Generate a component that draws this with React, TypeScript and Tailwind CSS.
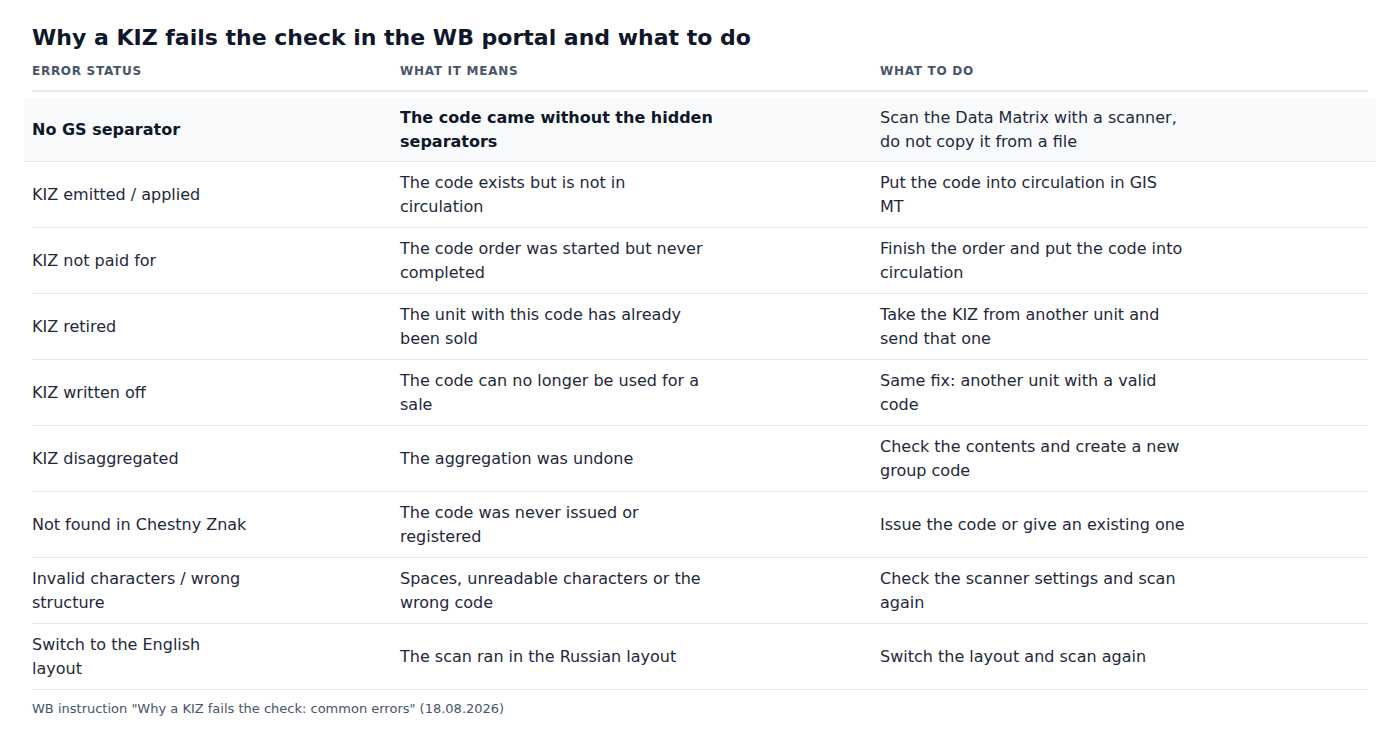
const rows = [
  ["No GS separator", "The code came without the hidden separators", "Scan the Data Matrix with a scanner, do not copy it from a file"],
  ["KIZ emitted / applied", "The code exists but is not in circulation", "Put the code into circulation in GIS MT"],
  ["KIZ not paid for", "The code order was started but never completed", "Finish the order and put the code into circulation"],
  ["KIZ retired", "The unit with this code has already been sold", "Take the KIZ from another unit and send that one"],
  ["KIZ written off", "The code can no longer be used for a sale", "Same fix: another unit with a valid code"],
  ["KIZ disaggregated", "The aggregation was undone", "Check the contents and create a new group code"],
  ["Not found in Chestny Znak", "The code was never issued or registered", "Issue the code or give an existing one"],
  ["Invalid characters / wrong structure", "Spaces, unreadable characters or the wrong code", "Check the scanner settings and scan again"],
  ["Switch to the English layout", "The scan ran in the Russian layout", "Switch the layout and scan again"],
];

export default function App() {
  return (
    <div className="min-h-screen bg-white px-8 pt-[24px] text-[#1e293b]" style={{ fontFamily: '"DejaVu Sans", sans-serif' }}>
      <h1 className="text-[22px] leading-[28px] font-bold text-[#0f172a]">
        Why a KIZ fails the check in the WB portal and what to do
      </h1>
      <div className="mt-[11px] grid grid-cols-[368px_480px_1fr] border-b-2 border-[#e2e8f0] pb-[11px] text-[12px] leading-4 font-bold tracking-[0.06em] text-[#475569] uppercase">
        <div>Error status</div>
        <div>What it means</div>
        <div>What to do</div>
      </div>
      <div className="mt-[6px]">
        {rows.map(([status, means, todo], i) => (
          <div
            key={status}
            className={
              i === 0
                ? "-mx-2 grid min-h-[64px] grid-cols-[368px_480px_1fr] items-center border-b border-[#e2e8f0] bg-[#f8fafc] px-2 text-[16px] leading-6 font-bold text-[#0f172a]"
                : "grid min-h-[66px] grid-cols-[368px_480px_1fr] items-center border-b border-[#e2e8f0] text-[16px] leading-6 text-[#1e293b]"
            }
          >
            <div className="max-w-[218px]">{status}</div>
            <div className={i === 0 ? "max-w-[322px]" : "max-w-[310px]"}>{means}</div>
            <div className={i === 0 ? "max-w-[305px] font-normal text-[#1e293b]" : "max-w-[305px]"}>{todo}</div>
          </div>
        ))}
      </div>
      <p className="mt-[11px] text-[13px] leading-4 text-[#475569]">
        WB instruction "Why a KIZ fails the check: common errors" (18.08.2026)
      </p>
    </div>
  );
}
